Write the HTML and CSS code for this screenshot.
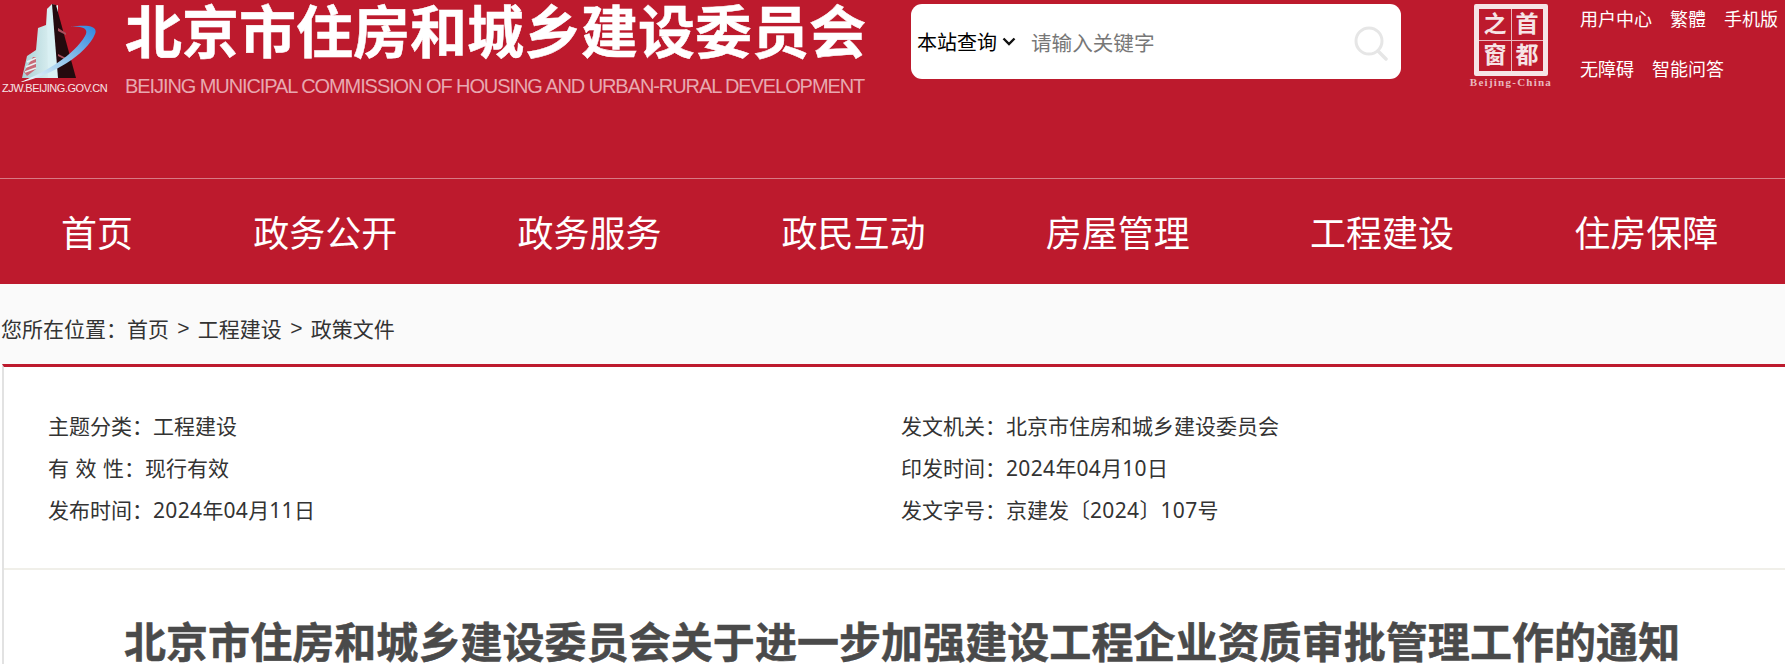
FILE: index.html
```html
<!DOCTYPE html>
<html lang="zh-CN">
<head>
<meta charset="utf-8">
<title>北京市住房和城乡建设委员会</title>
<link rel="stylesheet" href="styles.css">
</head>
<body>
<header class="masthead">
  <div class="brand">
    <div class="emblem">
      <svg class="emblem-art" width="110" height="82" viewBox="0 0 110 82">
        <defs>
          <linearGradient id="swoosh" x1="0" y1="1" x2="1" y2="0">
            <stop offset="0" stop-color="#ffffff"/>
            <stop offset=".4" stop-color="#a9d3f0"/>
            <stop offset="1" stop-color="#2f86de"/>
          </linearGradient>
          <linearGradient id="facade" x1="0" y1="0" x2="1" y2="0">
            <stop offset="0" stop-color="#a8d0d6"/>
            <stop offset="1" stop-color="#e6f6f7"/>
          </linearGradient>
        </defs>
        <polygon points="22,78 27,56 36,50 38,28 46,25 47,9 58,5 58,78" fill="url(#facade)"/>
        <polygon points="24,72 33,57 36,57 36,69 27,76" fill="#c86a78"/>
        <path d="M27 62l9-4M26 67l10-4M25 72l11-4" stroke="#e8f2f3" stroke-width="1.6"/>
        <polygon points="47,9 52,4 55,5 58,78 48,78" fill="#d9f0f3"/>
        <polygon points="52,4 56,5 76,78 58,78" fill="#230a0e"/>
        <polygon points="58,28 66,33 66,35 58,31" fill="#a8505e"/>
        <polygon points="58,54 68,59 68,61 58,56" fill="#a8505e"/>
        <path d="M18 83 C48 77 86 56 95 34 C98 27 90 24 70 27 C84 26 89 29 85 36 C74 55 45 73 18 83 Z" fill="url(#swoosh)"/>
      </svg>
      <span class="emblem-url">ZJW.BEIJING.GOV.CN</span>
    </div>
    <div class="brand-text">
      <div class="brand-cn">北京市住房和城乡建设委员会</div>
      <div class="brand-en">BEIJING MUNICIPAL COMMISSION OF HOUSING AND URBAN-RURAL DEVELOPMENT</div>
    </div>
  </div>
  <form class="search">
    <span class="search-scope">本站查询
      <svg class="chevron" width="14" height="9" viewBox="0 0 14 9"><path d="M1.5 1.5 7 7l5.5-5.5" fill="none" stroke="#111" stroke-width="2.4"/></svg>
    </span>
    <span class="search-hint">请输入关键字</span>
    <svg class="search-icon" width="34" height="36" viewBox="0 0 34 36"><circle cx="15" cy="15" r="13" fill="none" stroke="#e6e6e6" stroke-width="3"/><path d="M24 25l8 8" stroke="#e6e6e6" stroke-width="3.5" stroke-linecap="round"/></svg>
  </form>
  <div class="capital">
    <div class="capital-seal">
      <span>之</span><span>首</span><span>窗</span><span>都</span>
    </div>
    <div class="capital-en">Beijing-China</div>
  </div>
  <div class="quick-links">
    <div class="quick-row"><a>用户中心</a><a>繁體</a><a>手机版</a></div>
    <div class="quick-row"><a>无障碍</a><a>智能问答</a></div>
  </div>
</header>
<nav class="mainnav">
  <a>首页</a><a>政务公开</a><a>政务服务</a><a>政民互动</a><a>房屋管理</a><a>工程建设</a><a>住房保障</a>
</nav>
<div class="crumbs">您所在位置：<a>首页</a><i>&gt;</i><a>工程建设</a><i>&gt;</i><a>政策文件</a></div>
<main class="article">
  <section class="meta">
    <div>主题分类：工程建设</div>
    <div>发文机关：北京市住房和城乡建设委员会</div>
    <div class="spaced">有 效 性：现行有效</div>
    <div>印发时间：<span class="num">2024</span>年<span class="num">04</span>月<span class="num">10</span>日</div>
    <div>发布时间：<span class="num">2024</span>年<span class="num">04</span>月<span class="num">11</span>日</div>
    <div>发文字号：京建发〔<span class="num">2024</span>〕<span class="num">107</span>号</div>
  </section>
  <h1 class="headline">北京市住房和城乡建设委员会关于进一步加强建设工程企业资质审批管理工作的通知</h1>
</main>
</body>
</html>
```
FILE: styles.css
```css
* { box-sizing: border-box; }
html, body { margin: 0; height: 664px; overflow: hidden; background: #fff; }
body { font-family: "Liberation Sans", "Noto Sans CJK SC", sans-serif; color: #333; }

.masthead { height: 178px; background: #bd1a2d; display: flex; align-items: flex-start; }
.brand { display: flex; width: 911px; }
.emblem { width: 125px; display: flex; flex-direction: column; align-items: flex-start; }
.emblem-art { display: block; }
.emblem-url { font-size: 11px; line-height: 12px; color: #f6e4e6; margin-left: 2px; white-space: nowrap; letter-spacing: -.45px; }
.brand-text { display: flex; flex-direction: column; }
.brand-cn { font-size: 57px; line-height: 62px; margin-top: 2px; font-weight: 700; color: #fff; white-space: nowrap; -webkit-text-stroke: .5px #fff; }
.brand-en { font-size: 20px; line-height: 24px; margin-top: 10px; color: #e8a8b0; letter-spacing: -1.08px; white-space: nowrap; }

.search { width: 490px; height: 75px; margin-top: 4px; background: #fff; border-radius: 11px; display: flex; align-items: center; padding: 0 13px 0 6px; }
.search-scope { font-size: 20px; color: #000; white-space: nowrap; display: flex; align-items: center; gap: 5px; }
.search-hint { font-size: 20.6px; color: #777; margin-left: 15px; flex: 1; }
.search-icon { display: block; margin-top: 4px; }

.capital { width: 84px; margin: 4px 0 0 68px; display: flex; flex-direction: column; align-items: center; }
.capital-seal { width: 74px; height: 72px; border: 5px solid #f6e4e6; border-radius: 2px; display: grid; grid-template-columns: 1fr 1fr; grid-template-rows: 1fr 1fr; background: linear-gradient(#e9b9bf, #e9b9bf) center / 100% 1px no-repeat, linear-gradient(#e9b9bf, #e9b9bf) center / 1px 100% no-repeat; }
.capital-seal span { display: flex; align-items: center; justify-content: center; font-family: "Liberation Serif", "Noto Sans CJK SC", serif; color: #f6e4e6; font-size: 23px; font-weight: 700; line-height: 1; }
.capital-en { font-family: "Liberation Serif", serif; font-size: 11px; font-weight: 700; line-height: 12px; margin-top: 0; color: #eab8be; letter-spacing: 1.25px; white-space: nowrap; }

.quick-links { margin-left: 27px; }
.quick-row { display: flex; gap: 18px; color: #fff; font-size: 18px; line-height: 24px; white-space: nowrap; }
.quick-row:first-child { margin-top: 8px; }
.quick-row + .quick-row { margin-top: 26px; }

.mainnav { height: 106px; background: #bd1a2d; border-top: 1px solid #d87a85; display: flex; align-items: center; gap: 120.2px; padding: 0 0 2px 61px; }
.mainnav a { color: #fff; font-size: 36px; white-space: nowrap; }

.crumbs { height: 80px; background: #fafafa; display: flex; align-items: center; font-size: 21px; color: #333; padding: 8px 0 0 1px; white-space: nowrap; }
.crumbs i { font-style: normal; margin: 0 8.3px; }

.article { margin-left: 2px; border-left: 2px solid #e2e2e2; border-top: 3px solid #bd1a2d; height: 300px; }
.meta { height: 203px; padding: 37px 0 0 44px; border-bottom: 2px solid #f0efe9; display: grid; grid-template-columns: 853px 1fr; grid-auto-rows: 42px; align-items: center; font-family: "Noto Sans", "Noto Sans CJK SC", sans-serif; font-size: 21px; color: #333; }
.spaced { word-spacing: 1px; }
.num { letter-spacing: .35px; }
.headline { margin: 48px 0 0 120px; font-size: 42px; line-height: 52px; font-weight: 700; letter-spacing: .06px; color: #4a4a4a; white-space: nowrap; -webkit-text-stroke: .5px #4a4a4a; }
```
